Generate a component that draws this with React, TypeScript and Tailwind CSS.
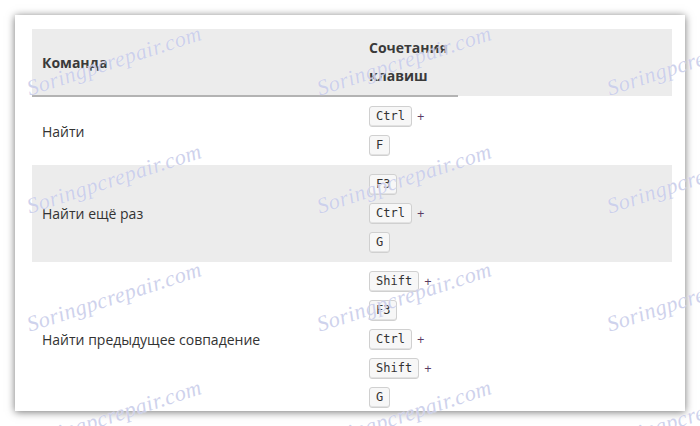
import React from "react";

const Kbd = ({ children }: { children: React.ReactNode }) => (
  <span className="inline-flex h-[21px] items-center rounded-[3px] border border-[#d0d0d0] bg-[#f7f7f7] px-[6px] text-[12px] leading-[19px] text-[#333] shadow-[inset_0_-1px_0_#e2e2e2] [font-family:'DejaVu_Sans_Mono',monospace]">
    {children}
  </span>
);

const Line = ({ k, plus }: { k: string; plus?: boolean }) => (
  <div className="flex h-[29px] items-center">
    <Kbd>{k}</Kbd>
    {plus && <span className="ml-[5px] text-[13px] text-[#5a3c63]">+</span>}
  </div>
);

const rows: { name: string; keys: { k: string; plus?: boolean }[]; bg: string }[] = [
  { name: "Найти", keys: [{ k: "Ctrl", plus: true }, { k: "F" }], bg: "bg-white" },
  {
    name: "Найти ещё раз",
    keys: [{ k: "F3" }, { k: "Ctrl", plus: true }, { k: "G" }],
    bg: "bg-[#ececec]",
  },
  {
    name: "Найти предыдущее совпадение",
    keys: [
      { k: "Shift", plus: true },
      { k: "F3" },
      { k: "Ctrl", plus: true },
      { k: "Shift", plus: true },
      { k: "G" },
    ],
    bg: "bg-white",
  },
];

export default function App() {
  return (
    <div className="relative h-[426px] w-[700px] overflow-hidden bg-white [font-family:'Open_Sans',sans-serif]">
      <div className="pl-[15px] pt-[15px]">
        <div className="h-[396px] w-[670px] overflow-hidden bg-white pl-[17px] pr-[13px] pt-[14px] shadow-[0_1px_8px_rgba(0,0,0,0.55)]">
          <div className="grid grid-cols-[327px_99px_1fr] text-[14px] text-[#333]">
            <div className="flex h-[68px] items-center border-b-2 border-[#b3b3b3] bg-[#ececec] px-[10px] font-bold text-[#3a3a3a]">
              Команда
            </div>
            <div className="flex h-[68px] flex-col justify-center border-b-2 border-[#b3b3b3] bg-[#ececec] px-[10px] font-bold leading-[28px] text-[#3a3a3a]">
              <div>Сочетания</div>
              <div>клавиш</div>
            </div>
            <div className="h-[67px] bg-[#ececec]" />
            {rows.map((r) => (
              <React.Fragment key={r.name}>
                <div className={`flex items-center px-[10px] ${r.bg}`}>{r.name}</div>
                <div className={`px-[10px] py-[5px] ${r.bg}`}>
                  {r.keys.map((k, i) => (
                    <Line key={i} k={k.k} plus={k.plus} />
                  ))}
                </div>
                <div className={r.bg} />
              </React.Fragment>
            ))}
          </div>
        </div>
      </div>
      <div className="pointer-events-none absolute left-[-31px] top-[1px] grid grid-cols-[repeat(3,290px)] grid-rows-[repeat(4,118px)]">
        {Array.from({ length: 12 }).map((_, i) => (
          <div key={i} className="flex items-center justify-center">
            <span className="-rotate-[18deg] whitespace-nowrap text-[22px] italic tracking-[0.5px] text-[rgba(190,195,230,0.75)] [font-family:'Liberation_Serif',serif] [text-shadow:0_0_1px_rgba(255,255,255,0.8)]">
              Soringpcrepair.com
            </span>
          </div>
        ))}
      </div>
    </div>
  );
}
